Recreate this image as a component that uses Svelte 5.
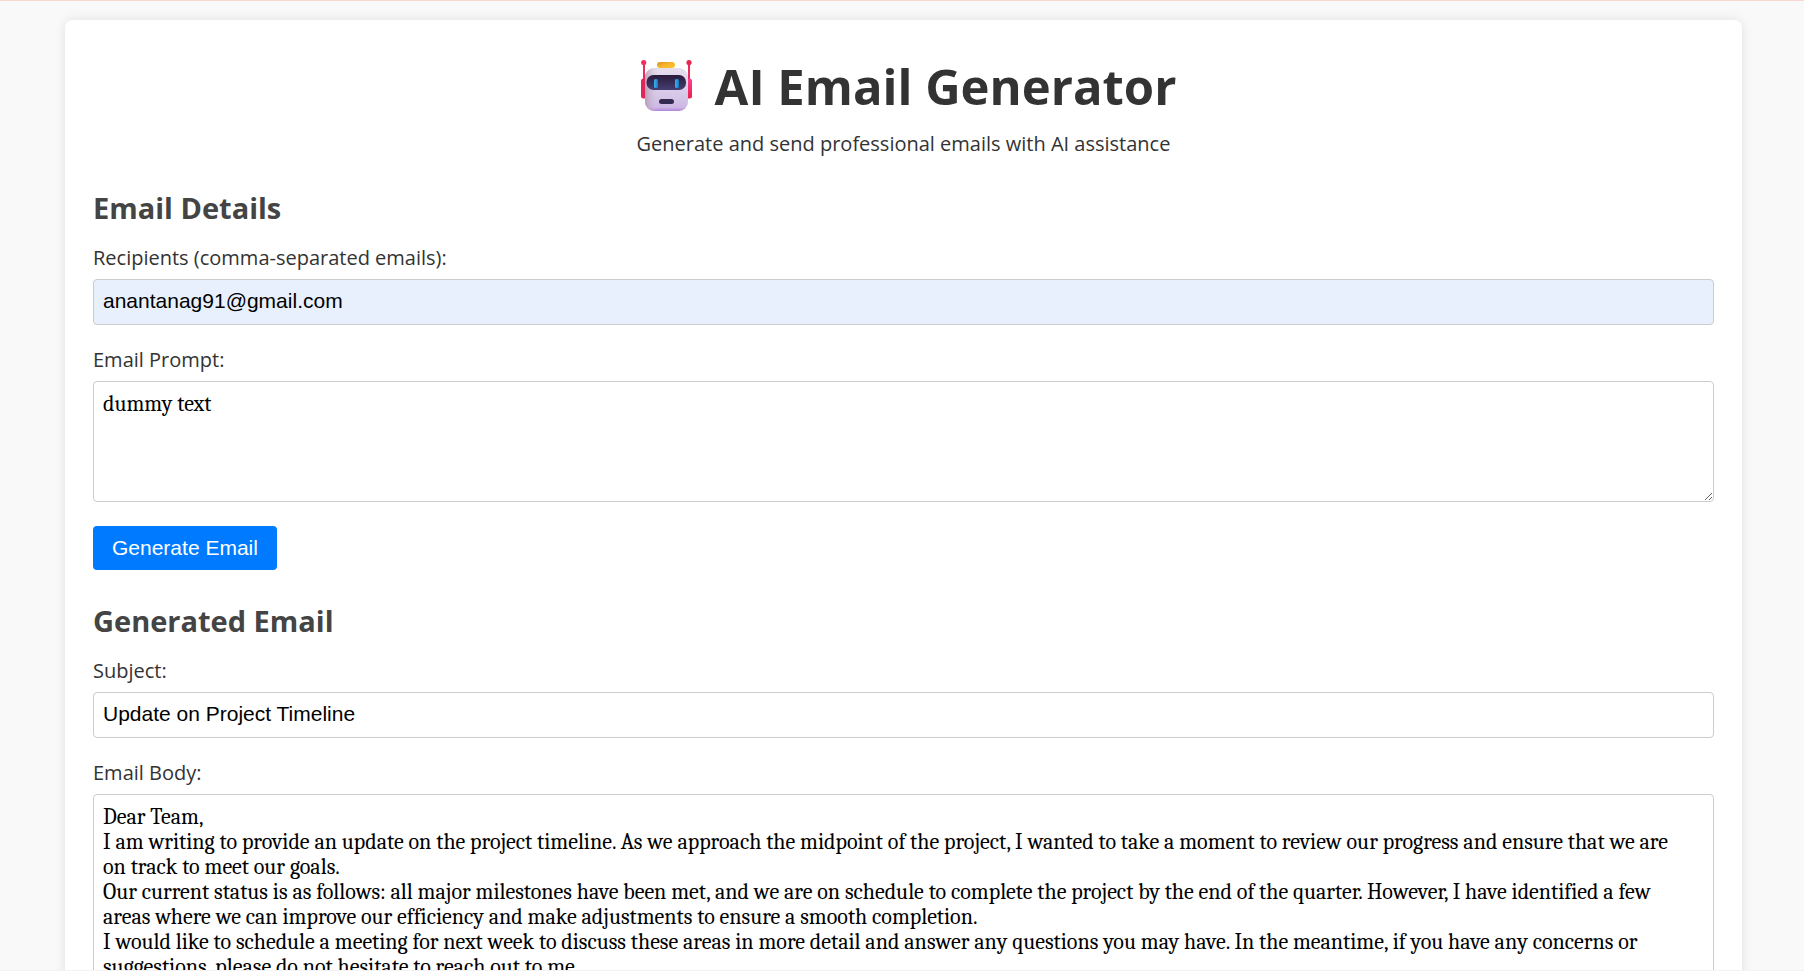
<script>
  let recipients = $state('anantanag91@gmail.com');
  let prompt = $state('dummy text');
  let subject = $state('Update on Project Timeline');
  let body = $state(
    [
      'Dear Team,',
      'I am writing to provide an update on the project timeline. As we approach the midpoint of the project, I wanted to take a moment to review our progress and ensure that we are on track to meet our goals.',
      'Our current status is as follows: all major milestones have been met, and we are on schedule to complete the project by the end of the quarter. However, I have identified a few areas where we can improve our efficiency and make adjustments to ensure a smooth completion.',
      'I would like to schedule a meeting for next week to discuss these areas in more detail and answer any questions you may have. In the meantime, if you have any concerns or suggestions, please do not hesitate to reach out to me.'
    ].join('\n')
  );
</script>

<div class="page">
  <main class="card">
    <header>
      <h1>
        <svg class="robot" viewBox="-9 0 62 54" aria-hidden="true">
          <defs>
            <linearGradient id="head" x1="0" y1="0" x2="0" y2="1">
              <stop offset="0" stop-color="#e6dfee" />
              <stop offset="0.75" stop-color="#d3c3e6" />
              <stop offset="0.92" stop-color="#cdb6e6" />
              <stop offset="1" stop-color="#b084da" />
            </linearGradient>
            <linearGradient id="shade" x1="0" y1="0" x2="1" y2="0">
              <stop offset="0" stop-color="#b08fa8" stop-opacity="0.75" />
              <stop offset="0.3" stop-color="#d8c8dc" stop-opacity="0" />
            </linearGradient>
            <linearGradient id="visor" x1="0" y1="0" x2="0" y2="1">
              <stop offset="0" stop-color="#2b1a3b" />
              <stop offset="1" stop-color="#453f72" />
            </linearGradient>
            <linearGradient id="eye" x1="0" y1="0" x2="1" y2="0">
              <stop offset="0" stop-color="#35b5f2" />
              <stop offset="1" stop-color="#1c78c4" />
            </linearGradient>
            <linearGradient id="cap" x1="0" y1="0" x2="1" y2="1">
              <stop offset="0" stop-color="#d98f2c" />
              <stop offset="0.5" stop-color="#f7b52c" />
              <stop offset="1" stop-color="#fcc72f" />
            </linearGradient>
            <linearGradient id="ear" x1="0" y1="0" x2="0" y2="1">
              <stop offset="0" stop-color="#ff3d8c" />
              <stop offset="1" stop-color="#e8214f" />
            </linearGradient>
          </defs>
          <rect x="3" y="4" width="2" height="20" fill="#ee2a5e" />
          <rect x="48" y="4" width="2" height="20" fill="#ee2a5e" />
          <circle cx="3.7" cy="3.6" r="2.6" fill="#f52c5c" />
          <circle cx="49" cy="3.6" r="2.6" fill="#e8264f" />
          <rect x="1" y="19.500" width="8" height="20" rx="2.5" fill="#e2265a" />
          <rect x="44" y="19.500" width="8" height="20" rx="2.5" fill="url(#ear)" />
          <rect x="5" y="9" width="43" height="43" rx="9" fill="url(#head)" />
          <rect x="5" y="9" width="43" height="43" rx="9" fill="url(#shade)" />
          <rect x="17" y="3" width="18" height="6" rx="3" fill="url(#cap)" />
          <rect x="6.500" y="16" width="39.500" height="15" rx="7" fill="url(#visor)" />
          <rect x="14" y="20" width="4" height="9" rx="1.500" fill="url(#eye)" />
          <rect x="35" y="20" width="4" height="9" rx="1.500" fill="url(#eye)" />
          <rect x="19" y="40" width="15" height="5" rx="2.500" fill="#352a52" />
        </svg>
        <span>AI Email Generator</span>
      </h1>
      <p>Generate and send professional emails with AI assistance</p>
    </header>

    <section>
      <h2>Email Details</h2>
      <div class="field">
        <label for="recipients">Recipients (comma-separated emails):</label>
        <input id="recipients" class="filled" type="text" bind:value={recipients} />
      </div>
      <div class="field">
        <label for="prompt">Email Prompt:</label>
        <textarea id="prompt" class="prompt" spellcheck="false" bind:value={prompt}></textarea>
      </div>
      <button type="button">Generate Email</button>
    </section>

    <section>
      <h2>Generated Email</h2>
      <div class="field">
        <label for="subject">Subject:</label>
        <input id="subject" type="text" bind:value={subject} />
      </div>
      <div class="field">
        <label for="body">Email Body:</label>
        <textarea id="body" class="body" spellcheck="false" bind:value={body}></textarea>
      </div>
    </section>
  </main>
</div>

<style>
  .page {
    box-sizing: border-box;
    height: 100vh;
    overflow-y: auto;
    scrollbar-width: none;
    padding: 19px 62px 20px 65px;
    border-top: 1px solid #f8d7d0;
    border-bottom: 1px solid #f3f3f3;
    background: #f9f9f9;
    color: #333;
    font-family: 'Open Sans', 'Noto Sans', sans-serif;
    font-size: 20px;
    line-height: 28px;
  }
  .card {
    padding: 33px 28px;
    border-radius: 8px;
    background: #fff;
    box-shadow: 0 0 12px rgba(0, 0, 0, 0.1);
  }
  header {
    text-align: center;
  }
  h1 {
    display: flex;
    justify-content: center;
    align-items: center;
    gap: 22px;
    margin: 0;
    font-size: 49px;
    line-height: 66px;
  }
  .robot {
    width: 62px;
    height: 54px;
  }
  p {
    margin: 11px 0 0;
  }
  section {
    margin-top: 30px;
  }
  section + section {
    margin-top: 31px;
  }
  h2 {
    margin: 0 0 16px;
    color: #444;
    font-size: 29px;
    line-height: 40px;
  }
  .field {
    display: flex;
    flex-direction: column;
    gap: 7px;
    margin-bottom: 21px;
  }
  input,
  textarea {
    box-sizing: border-box;
    width: 100%;
    margin: 0;
    border: 1px solid #ccc;
    border-radius: 4px;
    background: #fff;
    color: #000;
  }
  input {
    height: 46px;
    padding: 8px 9px 10px;
    font-family: 'Liberation Sans', Arial, sans-serif;
    font-size: 21px;
  }
  input.filled {
    background: #e8f0fe;
  }
  textarea {
    padding: 10px 24px 8px 9px;
    resize: vertical;
    font-family: Cambria, 'DejaVu Serif Condensed', serif;
    font-size: 22px;
    line-height: 25px;
  }
  .prompt {
    height: 121px;
    margin-bottom: 3px;
  }
  .body {
    height: 300px;
  }
  button {
    display: block;
    height: 44px;
    padding: 0 19px;
    border: 0;
    border-radius: 4px;
    background: #007bff;
    color: #fff;
    font-family: 'Liberation Sans', Arial, sans-serif;
    font-size: 21px;
  }
</style>
